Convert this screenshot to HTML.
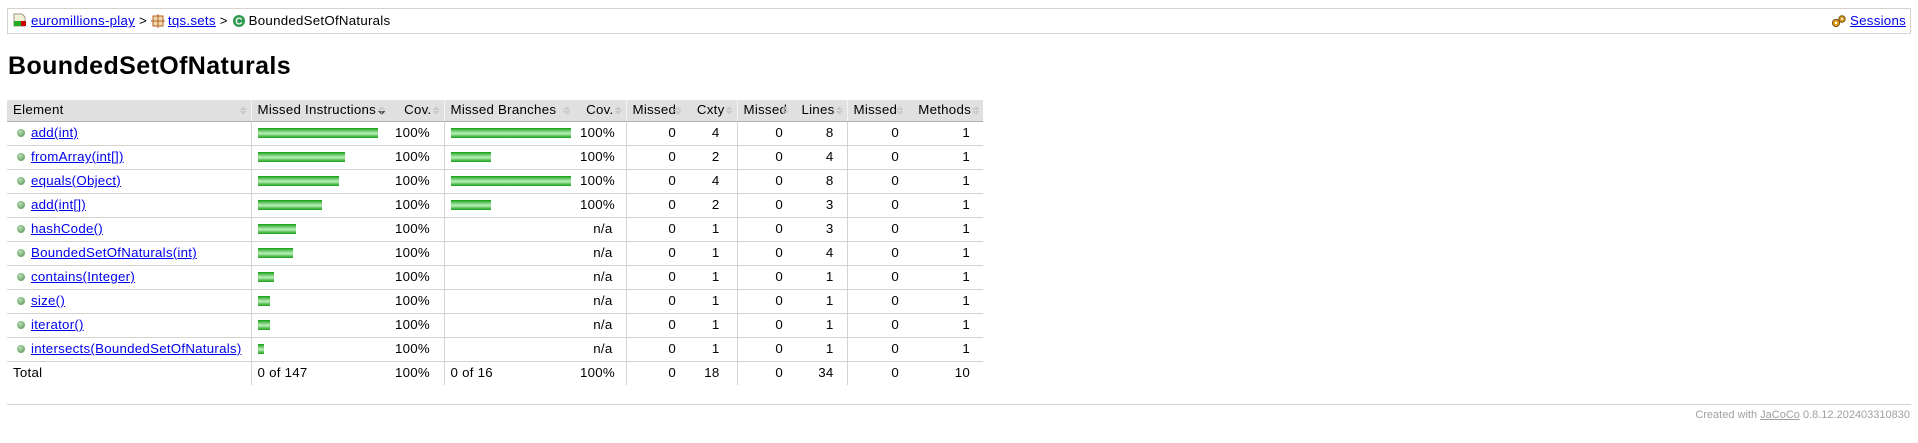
<!DOCTYPE html>
<html><head><meta charset="utf-8"><style>
*{box-sizing:border-box}
body{margin:0;width:1918px;height:443px;background:#fff;font-family:"Liberation Sans",sans-serif;font-size:13.3px;letter-spacing:0.25px;color:#000;position:relative;overflow:hidden}
a{color:#00e;text-decoration:underline}
.bc{position:absolute;left:7px;top:8px;width:1904px;height:26px;border:1px solid #d6d3ce;padding:3px 4px;line-height:18px;white-space:nowrap}
.bc .r{position:absolute;right:4px;top:3px}
.ic{display:inline-block;vertical-align:-3px;margin-right:3px}
h1{position:absolute;left:8px;top:48px;margin:0;font-size:25px;letter-spacing:0.4px;font-weight:bold;line-height:36px}
table{position:absolute;left:7px;top:100px;border-collapse:collapse;table-layout:fixed;width:976px}
td{white-space:nowrap;padding:0 6px;height:24px;border-bottom:1px solid #d6d3ce;line-height:18px}
thead td{background:#e0e0e0;height:21px;border-bottom:1px solid #b0b0b0;position:relative;padding-right:14px}
thead td:after{content:"";position:absolute;right:4px;top:6px;width:7px;height:9px;background:
 linear-gradient(to bottom right,transparent 50%,#c8c8c8 50%) 0 0/3.5px 4px no-repeat,
 linear-gradient(to bottom left,transparent 50%,#c8c8c8 50%) 3.5px 0/3.5px 4px no-repeat,
 linear-gradient(to top right,transparent 50%,#c8c8c8 50%) 0 5px/3.5px 4px no-repeat,
 linear-gradient(to top left,transparent 50%,#c8c8c8 50%) 3.5px 5px/3.5px 4px no-repeat}
thead td.down:after{background:
 linear-gradient(to bottom right,transparent 50%,#c8c8c8 50%) 0 0/3.5px 4px no-repeat,
 linear-gradient(to bottom left,transparent 50%,#c8c8c8 50%) 3.5px 0/3.5px 4px no-repeat,
 linear-gradient(to top right,transparent 50%,#555 50%) 0 5px/3.5px 4px no-repeat,
 linear-gradient(to top left,transparent 50%,#555 50%) 3.5px 5px/3.5px 4px no-repeat}
thead td.n{padding-right:12px}
.g{border-left:1px solid #d6d3ce}
thead .g{border-left:1px solid #f4f4f4}
.n{text-align:right}
.bar{display:block;height:10px;background:linear-gradient(#14a014,#9fe39f 45%,#b9eeb9 55%,#14a014)}
.dot{display:inline-block;width:8px;height:8px;border-radius:50%;background:radial-gradient(circle at 40% 35%,#b8dcb8,#4f8f4f);vertical-align:0;margin-right:6px;margin-left:4px}
tfoot td{border-bottom:none}
tbody td:nth-child(3),tfoot td:nth-child(3){padding-right:15px}
tbody td:nth-child(5),tfoot td:nth-child(5){padding-right:13px}
tbody td:nth-child(6),tfoot td:nth-child(6){padding-right:9px}
tbody td:nth-child(7),tfoot td:nth-child(7){padding-right:17px}
tbody td:nth-child(8),tfoot td:nth-child(8){padding-right:9px}
tbody td:nth-child(9),tfoot td:nth-child(9){padding-right:13px}
tbody td:nth-child(10),tfoot td:nth-child(10){padding-right:8px}
tbody td:nth-child(11),tfoot td:nth-child(11){padding-right:13px}
.hr{position:absolute;left:7px;top:404px;width:1904px;border-top:1px solid #d6d3ce}
.ft{position:absolute;right:8px;top:409px;font-size:11px;letter-spacing:0;color:#a0a0a0}
.ft a{color:#a0a0a0}
</style></head><body>
<div class="bc"><svg class="ic" width="16" height="16" viewBox="0 0 16 16"><path d="M2 2h8l3 3v9H2z" fill="#f5f0d8" stroke="#998" /><rect x="2" y="9" width="7" height="5" fill="#2a2"/><rect x="9" y="9" width="5" height="5" fill="#c00"/></svg><a href="#">euromillions-play</a> &gt; <svg class="ic" width="14" height="14" viewBox="0 0 14 14"><rect x="2" y="2" width="10" height="10" fill="#f0d8b0" stroke="#b06020"/><path d="M7 0v14M0 7h14" stroke="#b06020"/></svg><a href="#">tqs.sets</a> &gt; <svg class="ic" width="14" height="14" viewBox="0 0 14 14"><circle cx="7" cy="7" r="6" fill="#2e9a4e"/><text x="7" y="10.5" font-size="10" font-weight="bold" fill="#fff" text-anchor="middle" font-family="Liberation Sans">C</text></svg>BoundedSetOfNaturals
<span class="r"><svg class="ic" width="16" height="14" viewBox="0 0 16 14"><circle cx="5" cy="9" r="3.6" fill="#e0a020" stroke="#7a5010"/><circle cx="5" cy="9" r="1.2" fill="#fff"/><circle cx="11" cy="5" r="3.2" fill="#e0a020" stroke="#7a5010"/><circle cx="11" cy="5" r="1" fill="#fff"/></svg><a href="#">Sessions</a></span></div>
<h1>BoundedSetOfNaturals</h1>
<table>
<colgroup><col style="width:244px"><col style="width:138px"><col style="width:55px"><col style="width:130px"><col style="width:52px"><col style="width:59px"><col style="width:52px"><col style="width:55px"><col style="width:55px"><col style="width:60px"><col style="width:76px"></colgroup>
<thead><tr><td>Element</td><td class="g down">Missed Instructions</td><td class="n">Cov.</td><td class="g">Missed Branches</td><td class="n">Cov.</td><td class="g n">Missed</td><td class="n">Cxty</td><td class="g n">Missed</td><td class="n">Lines</td><td class="g n">Missed</td><td class="n">Methods</td></tr></thead>
<tbody>
<tr><td><span class="dot"></span><a href="#">add(int)</a></td><td class="g"><span class="bar" style="width:120px"></span></td><td class="n">100%</td><td class="g"><span class="bar" style="width:120px"></span></td><td class="n">100%</td><td class="g n">0</td><td class="n">4</td><td class="g n">0</td><td class="n">8</td><td class="g n">0</td><td class="n">1</td></tr>
<tr><td><span class="dot"></span><a href="#">fromArray(int[])</a></td><td class="g"><span class="bar" style="width:87px"></span></td><td class="n">100%</td><td class="g"><span class="bar" style="width:40px"></span></td><td class="n">100%</td><td class="g n">0</td><td class="n">2</td><td class="g n">0</td><td class="n">4</td><td class="g n">0</td><td class="n">1</td></tr>
<tr><td><span class="dot"></span><a href="#">equals(Object)</a></td><td class="g"><span class="bar" style="width:81px"></span></td><td class="n">100%</td><td class="g"><span class="bar" style="width:120px"></span></td><td class="n">100%</td><td class="g n">0</td><td class="n">4</td><td class="g n">0</td><td class="n">8</td><td class="g n">0</td><td class="n">1</td></tr>
<tr><td><span class="dot"></span><a href="#">add(int[])</a></td><td class="g"><span class="bar" style="width:64px"></span></td><td class="n">100%</td><td class="g"><span class="bar" style="width:40px"></span></td><td class="n">100%</td><td class="g n">0</td><td class="n">2</td><td class="g n">0</td><td class="n">3</td><td class="g n">0</td><td class="n">1</td></tr>
<tr><td><span class="dot"></span><a href="#">hashCode()</a></td><td class="g"><span class="bar" style="width:38px"></span></td><td class="n">100%</td><td class="g"></td><td class="n">n/a</td><td class="g n">0</td><td class="n">1</td><td class="g n">0</td><td class="n">3</td><td class="g n">0</td><td class="n">1</td></tr>
<tr><td><span class="dot"></span><a href="#">BoundedSetOfNaturals(int)</a></td><td class="g"><span class="bar" style="width:35px"></span></td><td class="n">100%</td><td class="g"></td><td class="n">n/a</td><td class="g n">0</td><td class="n">1</td><td class="g n">0</td><td class="n">4</td><td class="g n">0</td><td class="n">1</td></tr>
<tr><td><span class="dot"></span><a href="#">contains(Integer)</a></td><td class="g"><span class="bar" style="width:16px"></span></td><td class="n">100%</td><td class="g"></td><td class="n">n/a</td><td class="g n">0</td><td class="n">1</td><td class="g n">0</td><td class="n">1</td><td class="g n">0</td><td class="n">1</td></tr>
<tr><td><span class="dot"></span><a href="#">size()</a></td><td class="g"><span class="bar" style="width:12px"></span></td><td class="n">100%</td><td class="g"></td><td class="n">n/a</td><td class="g n">0</td><td class="n">1</td><td class="g n">0</td><td class="n">1</td><td class="g n">0</td><td class="n">1</td></tr>
<tr><td><span class="dot"></span><a href="#">iterator()</a></td><td class="g"><span class="bar" style="width:12px"></span></td><td class="n">100%</td><td class="g"></td><td class="n">n/a</td><td class="g n">0</td><td class="n">1</td><td class="g n">0</td><td class="n">1</td><td class="g n">0</td><td class="n">1</td></tr>
<tr><td><span class="dot"></span><a href="#">intersects(BoundedSetOfNaturals)</a></td><td class="g"><span class="bar" style="width:6px"></span></td><td class="n">100%</td><td class="g"></td><td class="n">n/a</td><td class="g n">0</td><td class="n">1</td><td class="g n">0</td><td class="n">1</td><td class="g n">0</td><td class="n">1</td></tr>
</tbody>
<tfoot><tr><td>Total</td><td class="g">0 of 147</td><td class="n">100%</td><td class="g">0 of 16</td><td class="n">100%</td><td class="g n">0</td><td class="n">18</td><td class="g n">0</td><td class="n">34</td><td class="g n">0</td><td class="n">10</td></tr></tfoot>
</table>
<div class="hr"></div>
<div class="ft">Created with <a href="#">JaCoCo</a> 0.8.12.202403310830</div>
</body></html>
